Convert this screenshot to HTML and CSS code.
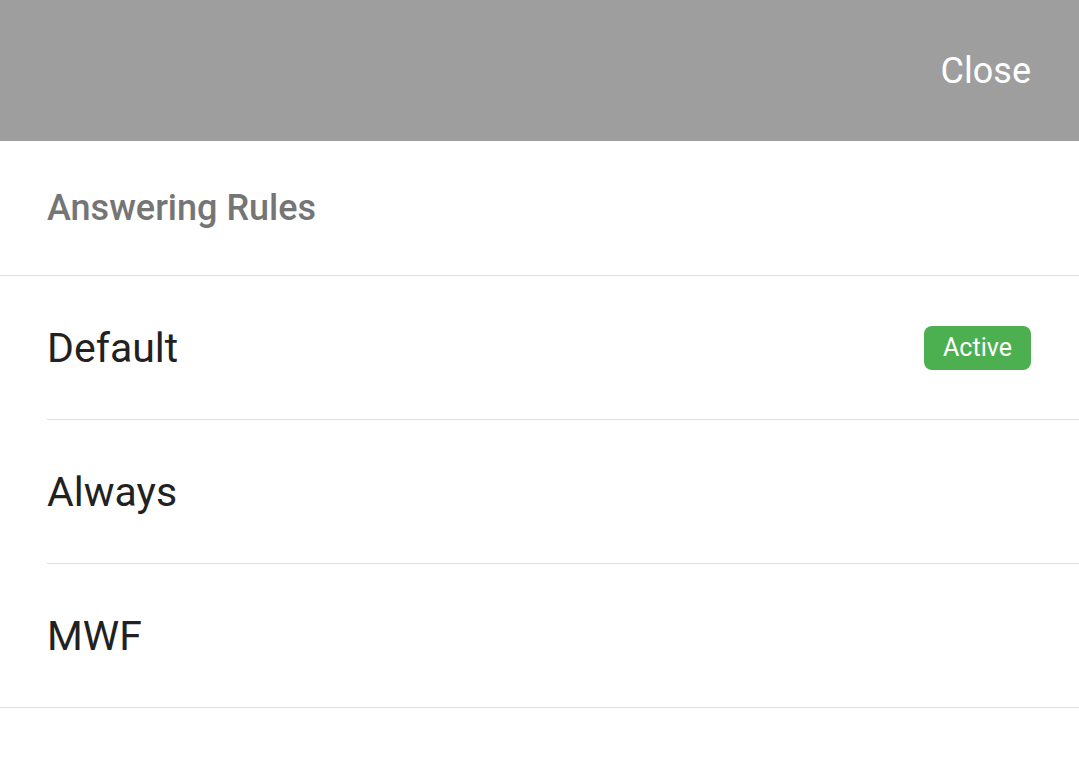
FILE: index.html
```html
<!DOCTYPE html>
<html lang="en">
<head>
    <meta charset="UTF-8">
    <meta name="viewport" content="width=device-width, initial-scale=1.0">
    <title>Answering Rules</title>
    <link rel="stylesheet" href="styles.css">
</head>
<body>
    <header class="top-bar">
        <button class="close-button">Close</button>
    </header>
    <div class="section-title">Answering Rules</div>
    <ul class="rule-list">
        <li class="rule-item">
            <span class="rule-name">Default</span>
            <span class="badge-active">Active</span>
        </li>
        <li class="rule-item">
            <span class="rule-name">Always</span>
        </li>
        <li class="rule-item">
            <span class="rule-name">MWF</span>
        </li>
    </ul>
</body>
</html>
```

FILE: styles.css
```css
body { font-family: Roboto, "Liberation Sans", sans-serif; margin: 0; padding: 0; background-color: #fff; }
.top-bar {
    background-color: #9e9e9e;
    height: 141px;
    display: flex;
    align-items: center;
    justify-content: flex-end;
    padding: 0 48px;
}
.close-button {
    background: none;
    border: none;
    color: white;
    font-family: inherit;
    font-size: 36px;
    padding: 0;
    cursor: pointer;
}
.section-title {
    height: 134px;
    display: flex;
    align-items: center;
    padding: 0 47px;
    color: #757575;
    font-size: 36px;
    font-weight: 500;
    border-bottom: 1px solid #e0e0e0;
}
.rule-list {
    list-style: none;
    margin: 0;
    padding: 0;
    border-bottom: 1px solid #e0e0e0;
}
.rule-item {
    margin-left: 47px;
    padding-right: 48px;
    height: 143px;
    display: flex;
    align-items: center;
    justify-content: space-between;
    border-bottom: 1px solid #e0e0e0;
}
.rule-item:last-child { border-bottom: none; }
.rule-name {
    font-size: 41px;
    color: #212121;
}
.badge-active {
    background-color: #4caf50;
    color: white;
    font-size: 25px;
    height: 44px;
    width: 107px;
    border-radius: 8px;
    display: flex;
    align-items: center;
    justify-content: center;
}
```
